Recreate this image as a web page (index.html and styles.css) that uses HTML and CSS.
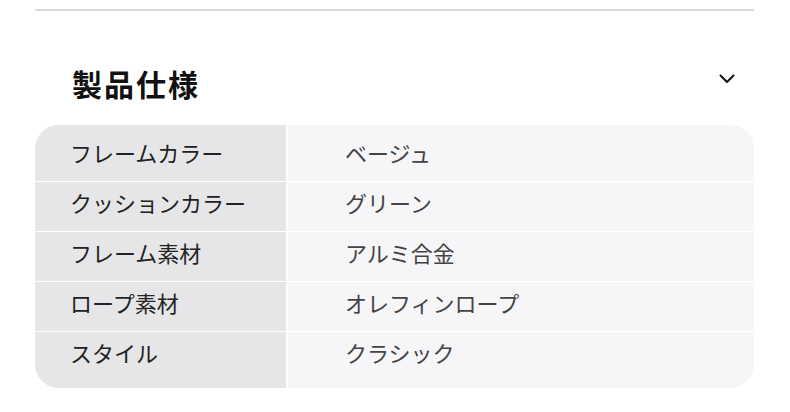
FILE: index.html
```html
<!DOCTYPE html>
<html lang="ja">
<head>
<meta charset="utf-8">
<link rel="stylesheet" href="styles.css">
</head>
<body>
<div class="page">
  <hr class="rule">
  <section class="spec">
    <div class="spec-head">
      <h2 class="spec-title">製品仕様</h2>
      <svg class="chevron" width="16" height="10" viewBox="0 0 16 10"><path d="M1.5 1.5 L8 8 L14.5 1.5" fill="none" stroke="#111" stroke-width="2" stroke-linecap="round" stroke-linejoin="round"/></svg>
    </div>
    <div class="spec-table">
      <div class="row"><div class="key">フレームカラー</div><div class="val">ベージュ</div></div>
      <div class="row"><div class="key">クッションカラー</div><div class="val">グリーン</div></div>
      <div class="row"><div class="key">フレーム素材</div><div class="val">アルミ合金</div></div>
      <div class="row"><div class="key">ロープ素材</div><div class="val">オレフィンロープ</div></div>
      <div class="row"><div class="key">スタイル</div><div class="val">クラシック</div></div>
    </div>
  </section>
</div>
</body>
</html>
```
FILE: styles.css
```css
* { box-sizing: border-box; }
html, body { margin: 0; padding: 0; background: #fff; }
body { font-family: "Noto Sans CJK JP", "Noto Sans", sans-serif; }
.page { padding: 9px 36px 0 35px; }
.rule { border: 0; height: 2px; background: #d9d9d9; margin: 0; }
.spec-head { display: flex; align-items: center; justify-content: space-between; padding: 30px 19px 0 37px; height: 114px; }
.spec-title { margin: 0; font-size: 30px; font-weight: 700; color: #111; letter-spacing: 2px; }
.chevron { margin-top: -8px; }
.spec-table { border-radius: 24px; overflow: hidden; background: #f6f6f8; }
.row { display: grid; grid-template-columns: 253px 1fr; border-top: 1px solid #fff; }
.row:first-child { border-top: 0; }
.key, .val { font-size: 22px; display: flex; align-items: center; height: 49px; padding-bottom: 10px; }
.row:first-child .key, .row:first-child .val { height: 56px; padding-top: 7px; }
.row:last-child .key, .row:last-child .val { height: 56px; padding-bottom: 17px; }
.key { background: #e6e6e8; color: #222; padding-left: 35px; border-right: 2px solid #fff; }
.val { color: #444; padding-left: 57px; }
```
